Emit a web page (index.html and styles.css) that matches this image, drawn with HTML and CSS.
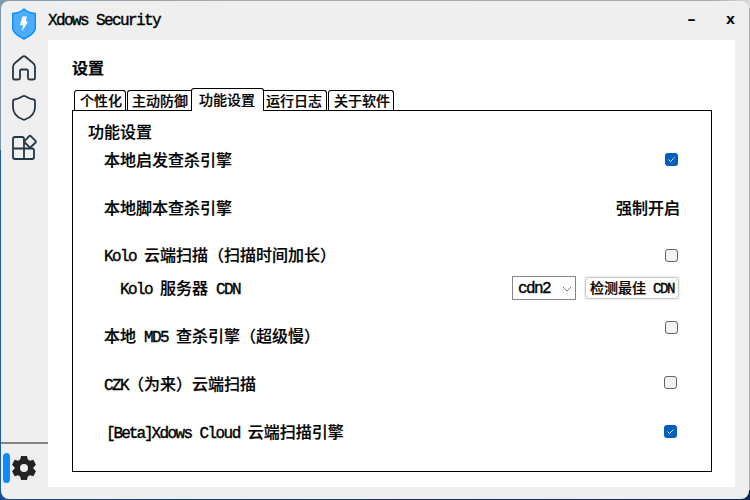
FILE: index.html
```html
<!DOCTYPE html>
<html lang="zh-CN">
<head>
<meta charset="utf-8">
<title>Xdows Security</title>
<link rel="stylesheet" href="styles.css">
</head>
<body>
<div class="window">
  <header class="titlebar">
    <svg class="logo" width="24" height="32" viewBox="0 0 24 32"><path d="M12 1 Q16 5 23.3 5.500 V21 Q22 26 12 31 Q2 26 .7 21 V5.500 Q8 5 12 1Z" fill="#4badff" stroke="#0f8df9" stroke-width="1.400"/><path d="M10.500 8.500h4.300l-1 5h2.400L10 23.500l.8-6.500H7.800Z" fill="#fff"/></svg>
    <span class="app-name en">Xdows Security</span>
    <span class="minimize">-</span>
    <span class="close">x</span>
  </header>
  <nav class="sidebar">
    <svg width="24" height="26" viewBox="0 0 24 26"><path d="M1 12 Q1 9.500 3 8 L10.500 1.700 Q12 .5 13.500 1.700 L21 8 Q23 9.500 23 12 V23 Q23 24.500 21.500 24.500 H17.500 Q16 24.500 16 23 V16 Q16 14.500 14.500 14.500 H9.500 Q8 14.500 8 16 V23 Q8 24.500 6.500 24.500 H2.500 Q1 24.500 1 23Z"/></svg>
    <svg width="24" height="26" viewBox="0 0 24 26"><path d="M10.700 1.300 Q12 .5 13.300 1.300 C16 3 18 4 21.500 4.500 Q23 4.700 23 6.200 V12 C23 18.500 18.500 22.500 13 24.500 Q12 25 11 24.500 C5.500 22.500 1 18.500 1 12 V6.200 Q1 4.700 2.500 4.500 C6 4 8 3 10.700 1.300Z"/></svg>
    <svg width="25" height="26" viewBox="0 0 25 26"><path d="M12 13.500 V4 Q12 2 10 2 H3 Q1 2 1 4 V22 Q1 24 3 24 H20 Q22 24 22 22 V15.500 Q22 13.500 20 13.500 H1 M12 13.500 V24"/><path d="M17.200 1.100 Q18 .3 18.800 1.100 L23.600 5.900 Q24.400 6.700 23.600 7.500 L18.800 12 Q18 12.800 17.200 12 L12.800 7.500 Q12 6.700 12.800 5.900Z"/></svg>
    <div class="settings-link">
      <i class="indicator"></i>
      <svg class="gear" width="26" height="26" viewBox="-13 -13 26 26"><path fill-rule="evenodd" d="M-3-12h6l.8 3.500 2.200 1.300 3.300-1.100 2.700 5-2.500 2.500v1.600l2.500 2.500-2.700 5-3.300-1.100L3.800 8.500 3 12h-6l-.8-3.500L-6 7.200-9.300 8.300l-2.700-5L-9.500.8v-1.600L-12-3.300l2.700-5 3.300 1.100 2.200-1.300ZM0-4a4 4 0 1 0 0 8a4 4 0 1 0 0-8Z"/></svg>
    </div>
  </nav>
  <main class="content">
    <h1>设置</h1>
    <div class="tabs">
      <span class="tab personal">个性化</span><span class="tab defense">主动防御</span><span class="tab active">功能设置</span><span class="tab logs">运行日志</span><span class="tab about">关于软件</span>
    </div>
    <section class="panel">
      <h2>功能设置</h2>
      <div class="row first"><span>本地启发查杀引擎</span><i class="check on"><svg viewBox="0 0 13 13"><path d="M3.500 6.500l2 2 4-4"/></svg></i></div>
      <div class="row"><span>本地脚本查杀引擎</span><span>强制开启</span></div>
      <div class="row"><span><span class="en">Kolo </span>云端扫描（扫描时间加长）</span><i class="check"></i></div>
      <div class="row sub"><span><span class="en">Kolo </span>服务器<span class="en"> CDN</span></span>
        <span class="controls"><span class="select"><span class="en">cdn2</span><svg width="10" height="6" viewBox="0 0 10 6"><path d="M1 1l4 4 4-4"/></svg></span><span class="button"><b>检测最佳<span class="en"> CDN</span></b></span></span>
      </div>
      <div class="row md5"><span>本地<span class="en"> MD5 </span>查杀引擎（超级慢）</span><i class="check"></i></div>
      <div class="row czk"><span><span class="en">CZK</span>（为来）云端扫描</span><i class="check"></i></div>
      <div class="row beta"><span><span class="en"><span class="tag">[Beta]</span>Xdows Cloud </span>云端扫描引擎</span><i class="check on"><svg viewBox="0 0 13 13"><path d="M3.500 6.500l2 2 4-4"/></svg></i></div>
    </section>
  </main>
</div>
</body>
</html>
```
FILE: styles.css
```css
* { box-sizing: border-box; }
body {
  margin: 0;
  width: 750px;
  height: 500px;
  padding: 1px;
  overflow: hidden;
  background:
    linear-gradient(90deg, #8199ae, #aaa8a8 30%, #aaa 95%, #ddd) top / 100% 8px no-repeat,
    linear-gradient(90deg, #1b4c99, #10295c) bottom / 100% 10px no-repeat,
    linear-gradient(90deg, #7895ad, #7895ad) left top / 8px 150px no-repeat,
    linear-gradient(90deg, #1c5ba6 50%, #aaa 50%);
  font: 500 16px/20px "Noto Sans CJK SC", sans-serif;
  color: #000;
  -webkit-text-stroke: .2px #000;
}
.window {
  width: 748px;
  height: 498px;
  display: grid;
  grid-template: 39px 1fr / 47px 1fr;
  border-radius: 8px;
  background: #efefef;
  overflow: hidden;
}
.en {
  font-family: "Liberation Mono", monospace;
  font-size: 16px;
  letter-spacing: -1.6px;
  white-space: pre;
  -webkit-text-stroke: .4px #000;
}
.titlebar {
  grid-column: 1 / -1;
  display: flex;
  align-items: center;
  padding: 6px 14px 0 11px;
}
.logo { margin-top: 1px; }
.app-name { margin: -5px auto 0 12px; }
.minimize, .close {
  font: bold 15px/20px "Liberation Mono", monospace;
  margin-top: -5px;
}
.minimize { transform: scaleX(1.5); }
.close { margin-left: 30px; }
.sidebar {
  display: flex;
  flex-direction: column;
  align-items: flex-start;
  gap: 14px;
  padding-top: 15px;
}
.sidebar > svg {
  margin-left: 11px;
  fill: none;
  stroke: #263645;
  stroke-width: 1.8;
  overflow: visible;
}
.settings-link {
  display: flex;
  align-items: center;
  width: 47px;
  height: 57px;
  margin-top: auto;
  padding: 0 0 8px 2px;
  border-top: 2px solid #858585;
}
.indicator {
  width: 7px;
  height: 30px;
  border-radius: 4px;
  background: #0b8cff;
}
.gear { margin-left: 1px; fill: #222; }
.content {
  width: 687px;
  height: 447px;
  padding: 18px 23px 0 24px;
  background: #fff;
}
h1 { margin: -1px 0 1px; font-size: 16px; line-height: 20px; font-weight: 700; }
.tabs {
  display: flex;
  align-items: flex-end;
  height: 32px;
  padding-left: 2px;
}
.tab {
  height: 20px;
  border: 1px solid #000;
  border-bottom: 0;
  border-radius: 3px 3px 0 0;
  font-size: 14px;
  line-height: 18px;
  white-space: nowrap;
}
.personal { width: 52px; padding-left: 5px; margin-right: 1px; }
.defense { width: 64px; padding-left: 4px; border-right: 0; border-top-right-radius: 0; }
.active {
  position: relative;
  width: 73px;
  height: 23px;
  margin-bottom: -1px;
  padding-left: 7px;
  line-height: 21px;
  background: #fff;
}
.logs { width: 63px; padding-left: 2px; border-left: 0; border-top-left-radius: 0; margin-right: 1px; }
.about { width: 66px; padding-left: 5px; }
.panel {
  height: 362px;
  padding: 10px 31px 0;
  border: 1px solid #000;
}
h2 { margin: 0 0 0 -16px; font-size: 16px; line-height: 20px; font-weight: 500; }
.row {
  display: flex;
  align-items: center;
  justify-content: space-between;
  height: 20px;
  margin-top: 28px;
  white-space: nowrap;
}
.first { margin-top: 8px; }
.sub { height: 24px; margin-top: 11px; padding-left: 16px; }
.md5 { margin-top: 26px; }
.check {
  width: 13px;
  height: 13px;
  margin: 1px 2px 0 0;
  border: 1px solid #646464;
  border-radius: 3px;
  background: #f3f3f3;
}
.on { border: 0; background: #005fb8; }
.on svg { display: block; fill: none; stroke: #d9eaff; }
.md5 .check { margin-top: -18px; }
.czk .check { margin-top: -3px; margin-right: 3px; }
.beta .check { margin-top: -1px; margin-right: 3px; }
.beta { padding-left: 2px; }
.tag { letter-spacing: -2px; }
.controls { display: flex; align-items: center; gap: 8px; margin-top: -1px; }
.select {
  display: flex;
  align-items: center;
  justify-content: space-between;
  width: 64px;
  height: 24px;
  padding: 2px 3px 0 5px;
  border: 1px solid #858585;
}
.select svg { fill: none; stroke: #777; }
.button { padding: 1px; background: #f0f0f0; }
.button b {
  display: block;
  width: 94px;
  height: 22px;
  padding-left: 4px;
  border: 1px solid #c8c8c8;
  border-radius: 4px;
  background: #fdfdfd;
  font-size: 14px;
  line-height: 18px;
  font-weight: 500;
}
.button .en { font-size: 14px; letter-spacing: -1.4px; }
```
